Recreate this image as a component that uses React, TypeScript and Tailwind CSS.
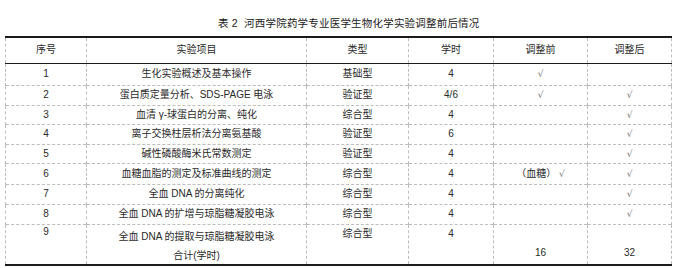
import React from 'react';

const rows = [
  { no: '1', name: '生化实验概述及基本操作', type: '基础型', hours: '4', before: '√', after: '', h: 'h-[22px]' },
  { no: '2', name: '蛋白质定量分析、SDS-PAGE 电泳', type: '验证型', hours: '4/6', before: '√', after: '√', h: 'h-[20px]' },
  { no: '3', name: '血清 γ-球蛋白的分离、纯化', type: '综合型', hours: '4', before: '', after: '√', h: 'h-[19px]' },
  { no: '4', name: '离子交换柱层析法分离氨基酸', type: '验证型', hours: '6', before: '', after: '√', h: 'h-[20px]' },
  { no: '5', name: '碱性磷酸酶米氏常数测定', type: '验证型', hours: '4', before: '', after: '√', h: 'h-[19px]' },
  { no: '6', name: '血糖血脂的测定及标准曲线的测定', type: '综合型', hours: '4', before: '（血糖）', after: '√', h: 'h-[21px]' },
  { no: '7', name: '全血 DNA 的分离纯化', type: '综合型', hours: '4', before: '', after: '√', h: 'h-[20px]' },
  { no: '8', name: '全血 DNA 的扩增与琼脂糖凝胶电泳', type: '综合型', hours: '4', before: '', after: '√', h: 'h-[20px]' },
];

const cell = 'border-x border-dashed border-[#bdbdbd] text-center p-0';
const rowLine = 'border-b border-dashed border-[#bdbdbd]';

const Check: React.FC = () => (
  <span className="font-['DejaVu_Sans',sans-serif] text-[9px] text-[#777]">√</span>
);

const App: React.FC = () => {
  return (
    <div className="w-[674px] h-[268px] bg-white text-[#2a2a2a] text-[10px] leading-[12px] font-['Liberation_Sans','Noto_Sans_CJK_SC',sans-serif] overflow-hidden">
      <div className="pt-[17px] h-[36px] pl-[218px] text-[10.5px] leading-[12px] tracking-[0.2px] text-[#222]">
        表 2&nbsp; 河西学院药学专业医学生物化学实验调整前后情况
      </div>
      <table className="ml-[5px] w-[666px] border-collapse table-fixed border-y-2 border-y-[#1a1a1a]">
        <colgroup>
          <col className="w-[81px]" />
          <col className="w-[220px]" />
          <col className="w-[102px]" />
          <col className="w-[85px]" />
          <col className="w-[94px]" />
          <col className="w-[84px]" />
        </colgroup>
        <thead>
          <tr className="h-[26px] border-b-[1.5px] border-solid border-b-[#1a1a1a]">
            <th className={`${cell} align-middle font-normal`}>序号</th>
            <th className={`${cell} align-middle font-normal`}>实验项目</th>
            <th className={`${cell} align-middle font-normal`}>类型</th>
            <th className={`${cell} align-middle font-normal`}>学时</th>
            <th className={`${cell} align-middle font-normal`}>调整前</th>
            <th className={`${cell} align-middle font-normal`}>调整后</th>
          </tr>
        </thead>
        <tbody>
          {rows.map((r) => (
            <tr key={r.no} className={`${r.h} ${rowLine}`}>
              <td className={`${cell} align-middle`}>{r.no}</td>
              <td className={`${cell} align-middle`}>{r.name}</td>
              <td className={`${cell} align-middle`}>{r.type}</td>
              <td className={`${cell} align-middle`}>{r.hours}</td>
              <td className={`${cell} align-middle`}>
                {r.no === '6' ? (
                  <>
                    {r.before} <Check />
                  </>
                ) : r.before ? (
                  <Check />
                ) : null}
              </td>
              <td className={`${cell} align-middle`}>{r.after ? <Check /> : null}</td>
            </tr>
          ))}
          <tr className="h-[41px]">
            <td className={`${cell} align-top pt-[1px]`}>9</td>
            <td className={`${cell} align-top pt-[6px]`}>
              <div>全血 DNA 的提取与琼脂糖凝胶电泳</div>
              <div className="mt-[7px]">合计(学时)</div>
            </td>
            <td className={`${cell} align-top pt-[3px]`}>综合型</td>
            <td className={`${cell} align-top pt-[3px]`}>4</td>
            <td className={`${cell} align-bottom pb-[5px]`}>16</td>
            <td className={`${cell} align-bottom pb-[5px]`}>32</td>
          </tr>
        </tbody>
      </table>
    </div>
  );
};

export default App;
